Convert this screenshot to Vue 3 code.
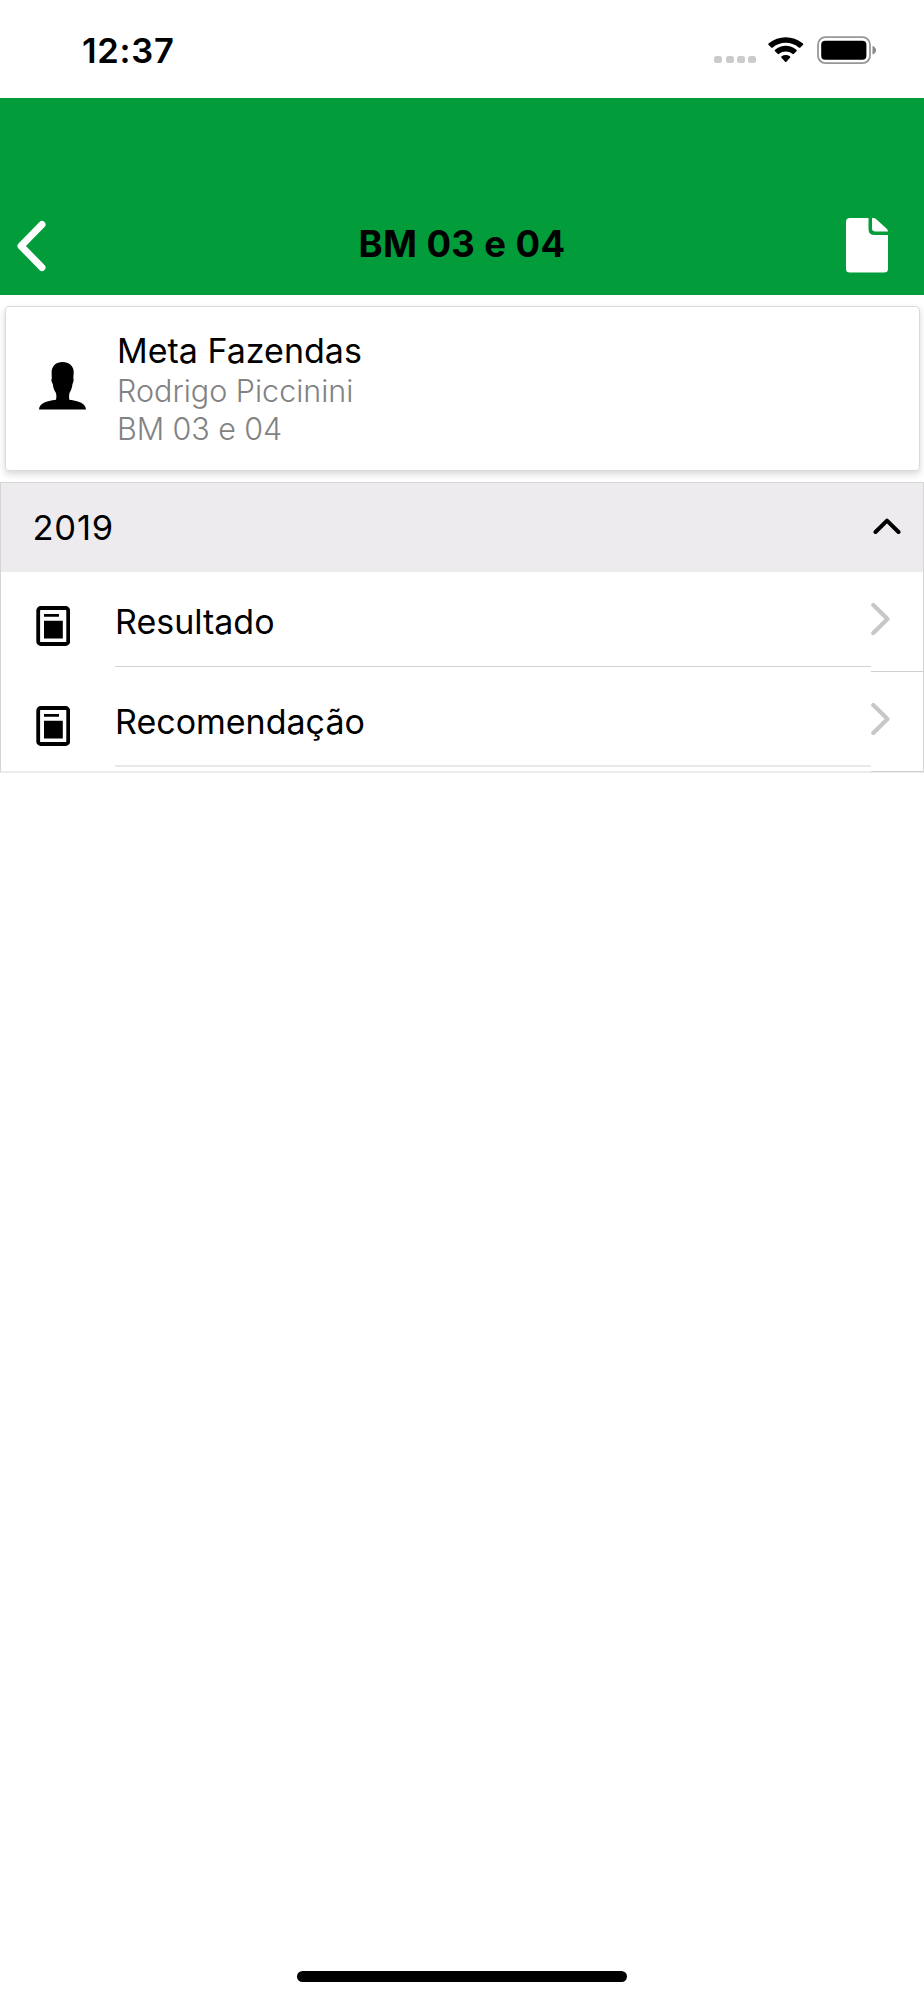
<script setup>
const reports = ['Resultado', 'Recomendação']
</script>

<template>
  <div class="screen">
    <div class="status">
      <span class="time">12:37</span>
      <div class="indicators">
        <div class="signal"><i v-for="n in 4" :key="n"></i></div>
        <svg class="wifi" width="38" height="28" viewBox="0 0 38 28">
          <path d="M1.7 8.1Q.8 7.2 1.8 6.3C11.5-1.7 26-1.7 35.7 6.3Q36.7 7.2 35.8 8.1L33.4 10.4Q32.6 11.1 31.7 10.4C24.2 4.3 13.3 4.3 5.8 10.4Q4.9 11.1 4.1 10.4Z" />
          <path d="M8 14.3Q7.2 13.4 8.1 12.7C14.5 7.4 23 7.4 29.4 12.7Q30.3 13.4 29.5 14.3L26.9 16.8Q26.1 17.5 25.3 16.8C21.4 13.8 16.1 13.8 12.2 16.8Q11.4 17.5 10.6 16.8Z" />
          <path d="M14.5 20.8Q13.7 20 14.6 19.3C17.1 17.5 20.4 17.5 22.9 19.3Q23.8 20 23 20.8L19.4 24.8Q18.8 25.4 18.1 24.8Z" />
        </svg>
        <svg class="battery" width="60" height="29" viewBox="0 0 60 29">
          <rect x="1" y="1.2" width="52" height="26" rx="7.5" fill="#fff" stroke="#979797" stroke-width="1.8" />
          <rect x="4.2" y="4.8" width="45.2" height="19" rx="4" />
          <path d="M55.500 9.800Q59 11.400 59 14.200T55.500 18.600Z" fill="#888" />
        </svg>
      </div>
    </div>

    <header class="bar">
      <svg class="back" width="30" height="52" viewBox="0 0 30 52">
        <path d="M25 4.5L4 26 25 47.5" fill="none" stroke="#fff" stroke-width="7" stroke-linecap="round" stroke-linejoin="round" />
      </svg>
      <h1>BM 03 e 04</h1>
      <svg class="doc" width="42" height="55" viewBox="0 0 42 55" fill="#fff">
        <path d="M4 0H22.500V11Q22.500 17 28.500 17H42V51Q42 54.500 38 54.500H4Q0 54.500 0 51V4Q0 0 4 0Z" />
        <path d="M26 0H27.500Q29 0 30 1L41 11Q42 12 42 13.500H29.500Q26 13.500 26 10.500Z" />
      </svg>
    </header>

    <section class="card">
      <svg class="person" width="48" height="48" viewBox="0 0 48 48">
        <path d="M23.500 0C30 0 34.700 4 34.700 10L34.300 16.500C35 17.500 34.500 20 33.500 22C33 26 32.200 28 30.700 30.500C30 32 30 35 30.300 37.800C40 39 46.500 41.500 47 47.500H0C.5 41.500 7 39 17 37.800C17.600 35 17.500 32 16.700 30.500C15 28 14.300 26 13.800 22C12.500 20 12 17.500 12.800 16.500L12.600 10C12.800 4 17 0 23.500 0Z" />
      </svg>
      <div>
        <div class="farm">Meta Fazendas</div>
        <div class="sub owner">Rodrigo Piccinini</div>
        <div class="sub code">BM 03 e 04</div>
      </div>
    </section>

    <section class="group">
      <div class="year">
        <span>2019</span>
        <svg width="28" height="17" viewBox="0 0 28 17">
          <path d="M2.500 14L14 2.600 25.500 14" fill="none" stroke="#000" stroke-width="4" stroke-linecap="round" stroke-linejoin="round" />
        </svg>
      </div>
      <div v-for="(name, i) in reports" :key="name" class="row" :class="{ last: i === reports.length - 1 }">
        <svg class="sheet" width="34" height="40" viewBox="0 0 34 40">
          <rect x="2.200" y="2" width="30" height="36" rx="2.500" fill="none" stroke="#000" stroke-width="3.800" />
          <path d="M8 8H23V10.800H8ZM8 14.800H26.800V32.500H8Z" />
        </svg>
        <div class="label">{{ name }}</div>
        <div class="go">
          <svg width="20" height="34" viewBox="0 0 20 34">
            <path d="M2.300 3L16.500 17 2.300 31" fill="none" stroke="#c7c7c9" stroke-width="4.200" stroke-linecap="round" stroke-linejoin="round" />
          </svg>
        </div>
      </div>
    </section>

    <div class="home"></div>
  </div>
</template>

<style>
body { margin: 0; background: #fff; }
</style>

<style scoped>
.screen { box-sizing: border-box; width: 924px; height: 2000px; display: flex; flex-direction: column; background: #fff; color: #000; font-family: Inter, "Liberation Sans", sans-serif; overflow: hidden; }
svg { display: block; flex: none; }
.status { box-sizing: border-box; height: 98px; flex: none; display: flex; justify-content: space-between; padding: 0 47px 0 82px; }
.time { font-size: 34.5px; font-weight: 600; line-height: 101px; letter-spacing: .75px; }
.indicators { display: flex; align-items: flex-start; padding-top: 36px; }
.signal { display: flex; gap: 3.2px; padding-top: 20px; margin-right: 11px; }
.signal i { width: 8px; height: 7px; border-radius: 2.5px; background: #cbcbcb; }
.wifi { margin: 1px 12px 0 0; }
.bar { box-sizing: border-box; height: 196.5px; flex: none; display: flex; justify-content: space-between; align-items: flex-start; padding: 119px 36px 0 17px; background: #029c3b; }
.back { margin-top: 3px; }
.doc { margin-top: 1px; }
h1 { margin: 7px 0 0 31px; font-size: 36.5px; font-weight: 700; line-height: 41px; letter-spacing: .38px; white-space: nowrap; }
.card { box-sizing: border-box; height: 165px; flex: none; margin: 11.5px 4px 0 5px; display: flex; padding-left: 33px; border: 1px solid #dadada; border-radius: 4px; box-shadow: 0 3px 7px rgba(0, 0, 0, .16); }
.person { margin: 55px 30px 0 0; }
.farm { margin-top: 23px; font-size: 34px; line-height: 42px; white-space: nowrap; }
.sub { font-size: 30.5px; font-weight: 300; line-height: 38px; color: #828282; white-space: nowrap; }
.code { letter-spacing: -.1px; }
.group { box-sizing: border-box; flex: none; margin-top: 11px; height: 291px; border: 1px solid #d5d5d5; border-bottom: 2px solid #ececec; }
.year { box-sizing: border-box; height: 89px; display: flex; justify-content: space-between; padding: 0 22.5px 0 31.5px; background: #edebee; font-size: 34.5px; line-height: 90px; letter-spacing: .8px; }
.year svg { margin-top: 35px; }
.row { height: 100px; display: flex; }
.sheet { margin: 34px 45px 0 35px; }
.label { box-sizing: border-box; width: 756px; height: 95px; flex: none; padding: 29px 0 0; border-bottom: 1px solid #d2d2d2; font-size: 34px; line-height: 42px; }
.go { box-sizing: border-box; height: 100px; flex: 1; padding-top: 30px; border-bottom: 1px solid #d0d0d0; }
.last { height: 99px; }
.last .label { border-bottom: 2px solid #e9e9e9; }
.home { width: 330px; height: 11px; margin: auto auto 18px; border-radius: 6px; background: #000; flex: none; }
</style>
